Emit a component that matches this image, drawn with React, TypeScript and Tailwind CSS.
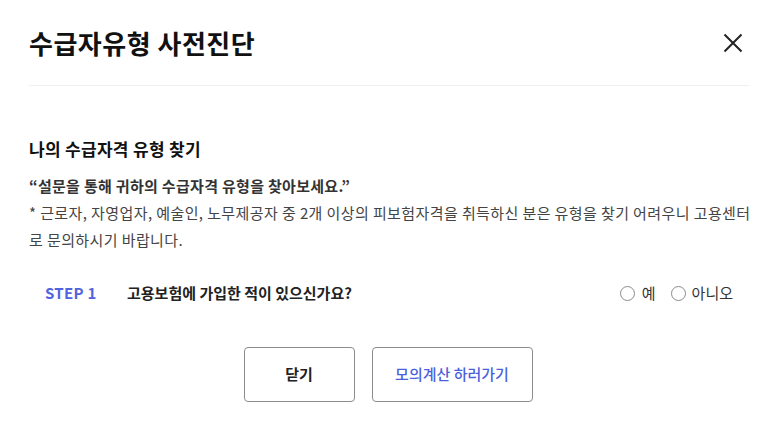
import React from "react";

export default function App() {
  return (
    <div
      className="w-[780px] h-[438px] bg-white overflow-hidden text-[#222]"
      style={{ fontFamily: '"Noto Sans CJK KR", "Noto Sans", sans-serif' }}
    >
      <div className="mx-[29px] w-[720px]">
        <div className="flex items-center justify-between h-[86px] border-b border-[#f0f0f0] pt-[1px]">
          <h1 className="text-[26px] leading-[36px] font-bold text-[#111] tracking-[0.5px]">
            수급자유형 사전진단
          </h1>
          <button className="w-[24px] h-[24px] mr-[4px] flex items-center justify-center">
            <svg width="20" height="20" viewBox="0 0 20 20" fill="none" stroke="#222" strokeWidth="2">
              <path d="M1.5 1.5 L18.5 18.5 M18.5 1.5 L1.5 18.5" />
            </svg>
          </button>
        </div>

        <div className="pt-[50px]">
          <h2 className="text-[17px] leading-[26px] font-bold text-[#111] tracking-[0.3px]">나의 수급자격 유형 찾기</h2>
          <p className="mt-[10px] text-[15px] leading-[27px] font-bold text-[#333] tracking-[0.3px]">
            “설문을 통해 귀하의 수급자격 유형을 찾아보세요.”
          </p>
          <p className="text-[15px] leading-[27px] text-[#444] tracking-[0.4px]">
            <span className="block whitespace-nowrap">
              * 근로자, 자영업자, 예술인, 노무제공자 중 2개 이상의 피보험자격을 취득하신 분은 유형을 찾기 어려우니 고용센터
            </span>
            <span className="block">로 문의하시기 바랍니다.</span>
          </p>
        </div>

        <div className="mt-[27px] flex items-center justify-between px-[16px] h-[26px]">
          <div className="flex items-center">
            <span className="w-[82px] text-[15px] font-bold text-[#5064e0] tracking-[0.3px]">STEP 1</span>
            <span className="text-[15px] font-bold text-[#222]">고용보험에 가입한 적이 있으신가요?</span>
          </div>
          <div className="flex items-center text-[15px] text-[#333]">
            <label className="flex items-center">
              <span className="w-[15px] h-[15px] rounded-full border border-[#8a8a8a] bg-white" />
              <span className="ml-[7px]">예</span>
            </label>
            <label className="flex items-center ml-[15px]">
              <span className="w-[15px] h-[15px] rounded-full border border-[#8a8a8a] bg-white" />
              <span className="ml-[6px]">아니오</span>
            </label>
          </div>
        </div>

        <div className="mt-[41px] flex justify-center gap-[17px] pr-[2px]">
          <button className="w-[111px] h-[55px] rounded-[4px] border border-[#8c8c8c] text-[15px] font-bold text-[#222] bg-white">
            닫기
          </button>
          <button className="w-[161px] h-[55px] rounded-[4px] border border-[#8c8c8c] text-[15px] font-medium text-[#4a5fdc] bg-white">
            모의계산 하러가기
          </button>
        </div>
      </div>
    </div>
  );
}
